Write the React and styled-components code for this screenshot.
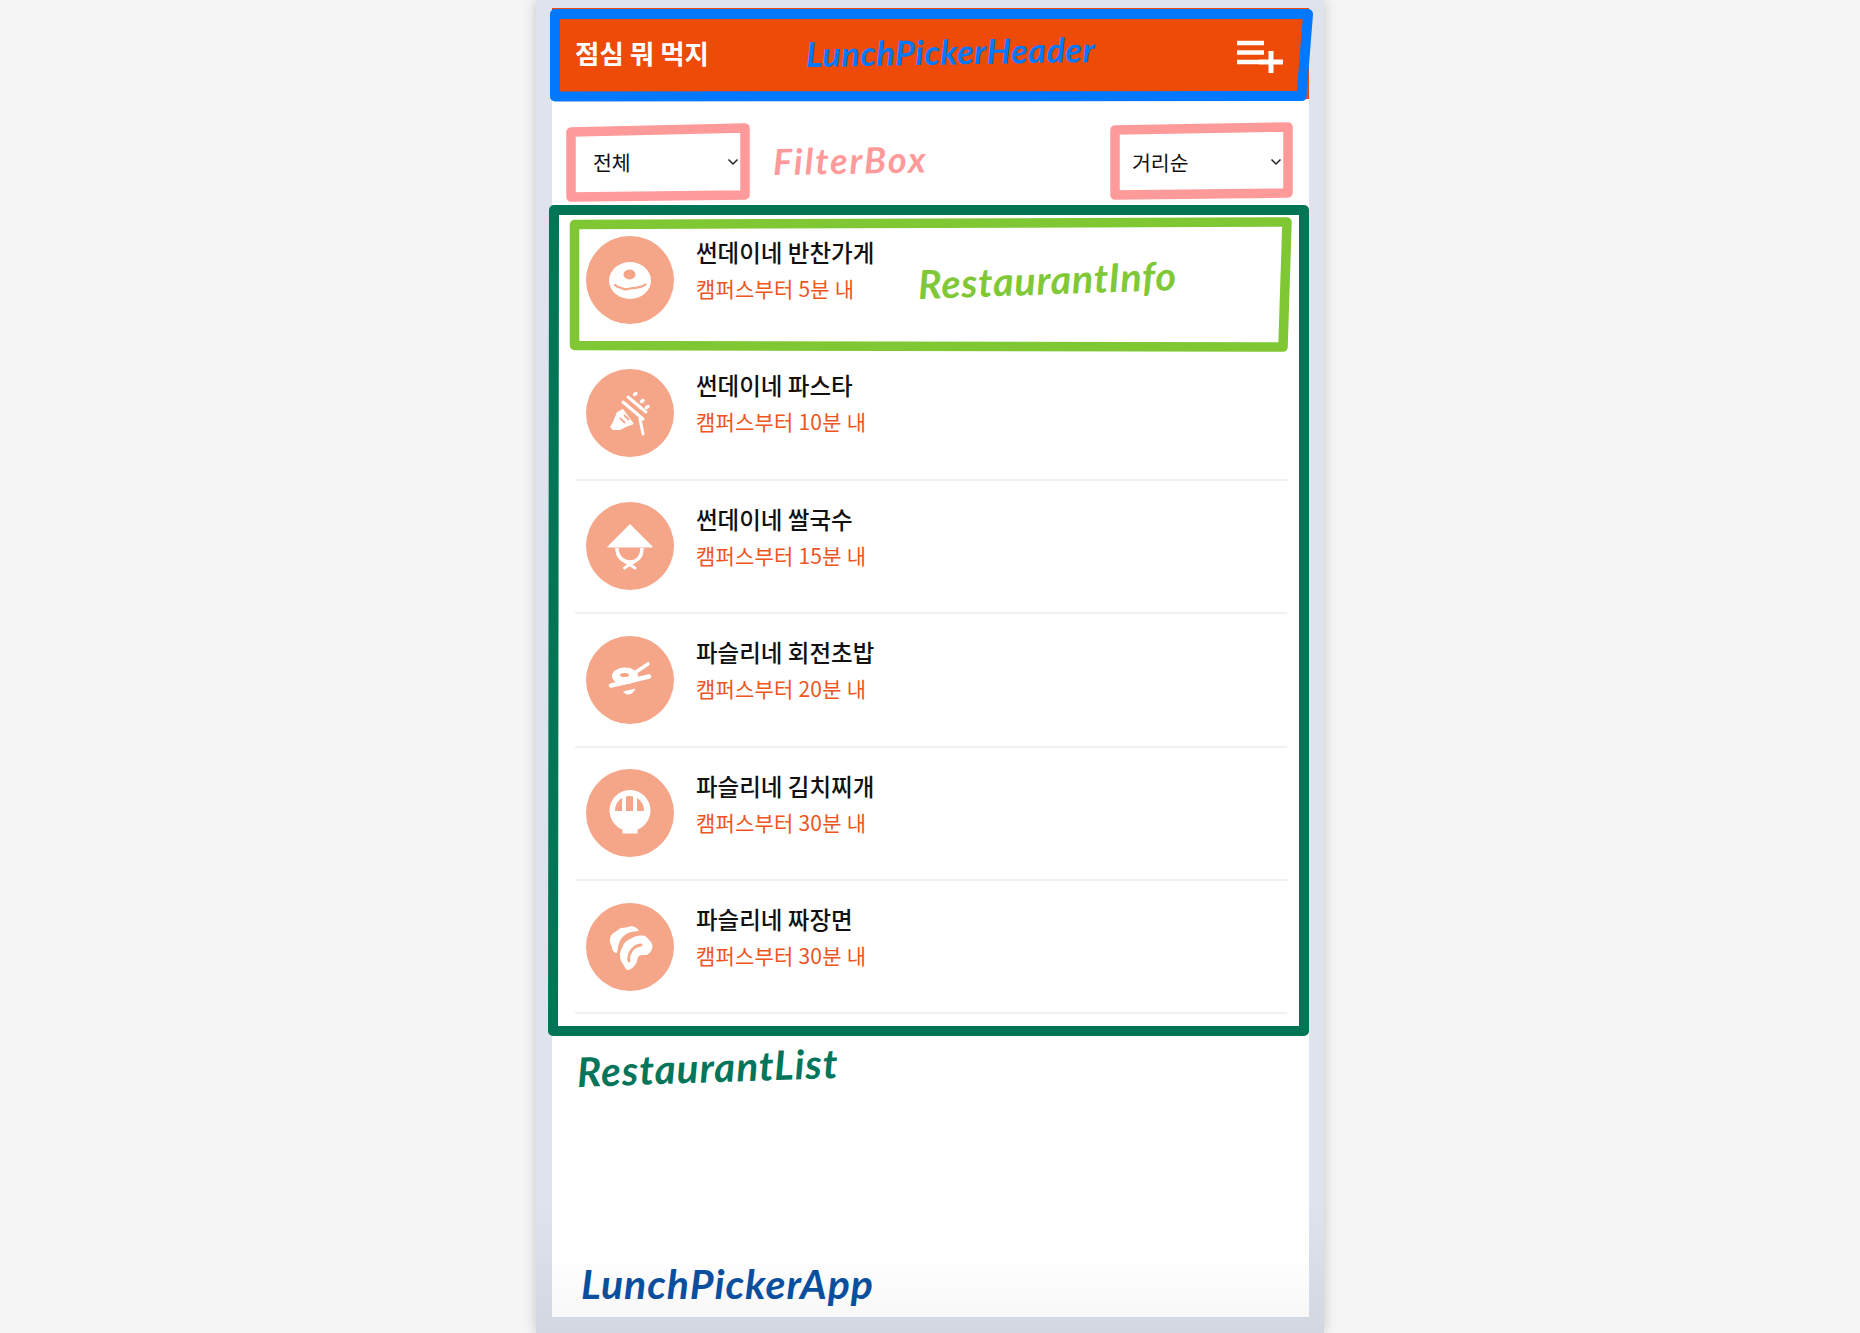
import React from "react";
import styled, { createGlobalStyle } from "styled-components";

const KR = `"Noto Sans CJK KR", "Noto Sans", sans-serif`;

const Global = createGlobalStyle`
  html, body { margin: 0; padding: 0; background: #f5f5f5; }
  #root { min-height: 1333px; }
  * { box-sizing: border-box; }
`;

const Page = styled.div`
  position: relative;
  height: 1333px;
  display: flex;
  justify-content: center;
  overflow: hidden;
  font-family: ${KR};
`;

const Phone = styled.div`
  width: 788px;
  height: 1333px;
  padding: 8px 15px 16px 16px;
  background: linear-gradient(#dfe3ee 0, #dfe3ee 90%, #d3d7e2 100%);
  box-shadow: 0 0 12px rgba(0, 0, 0, 0.2);
`;

const Screen = styled.main`
  height: 100%;
  background: linear-gradient(#fff 0, #fff 95%, #f8f8f9 100%);
  display: flex;
  flex-direction: column;
`;

const Header = styled.header`
  height: 91px;
  flex: none;
  background: #ee4a08;
  display: flex;
  align-items: center;
  justify-content: space-between;
  padding: 0 26px 0 23px;
`;

const Title = styled.h1`
  margin: 0 0 2px;
  color: #fff;
  font-size: 26.5px;
  line-height: 36px;
  font-weight: 700;
`;

const AddButton = styled.button`
  border: 0;
  padding: 0;
  background: none;
  display: flex;
  margin-top: 5px;
`;

const FilterBox = styled.div`
  height: 105px;
  flex: none;
  display: flex;
  align-items: center;
  justify-content: space-between;
  padding: 20px 26px 0 24px;
`;

const Select = styled.select`
  width: 164px;
  height: 56px;
  padding: 0 0 0 ${(p) => p.$inset}px;
  border: 0;
  border-radius: 8px;
  appearance: none;
  background: #fff url("data:image/svg+xml,%3Csvg xmlns='http://www.w3.org/2000/svg' width='12' height='8' viewBox='0 0 12 8'%3E%3Cpath d='M1.500 1.500L6 6l4.500-4.500' fill='none' stroke='%23222' stroke-width='1.500'/%3E%3C/svg%3E") no-repeat right 1px center;
  color: #111;
  font-family: ${KR};
  font-size: 20.5px;
`;

const List = styled.ul`
  list-style: none;
  margin: 10px 0 0;
  padding: 0 22px 0 23px;
`;

const Row = styled.li`
  height: 133.4px;
  padding-left: 11px;
  display: flex;
  align-items: center;
  gap: 22px;
  border-bottom: 2px solid #f0f0f0;
`;

const Badge = styled.div`
  width: 88px;
  height: 88px;
  flex: none;
  border-radius: 50%;
  background: #f5a588;
`;

const Info = styled.div`
  align-self: flex-start;
  padding-top: 22px;
`;

const Name = styled.h2`
  margin: 0;
  color: #111;
  font-size: 23.5px;
  line-height: 32px;
  font-weight: 500;
`;

const Distance = styled.p`
  margin: 4px 0 0;
  color: #ee5520;
  font-size: 21px;
  line-height: 32px;
  font-weight: 400;
  letter-spacing: 0.2px;
`;

const Marks = styled.svg`
  position: absolute;
  left: 0;
  top: 0;
  pointer-events: none;
`;

const Note = styled.span`
  position: absolute;
  left: ${(p) => p.$x}px;
  top: ${(p) => p.$y}px;
  color: ${(p) => p.$color};
  font-family: Lato, "Open Sans", sans-serif;
  font-style: italic;
  font-weight: 700;
  font-size: ${(p) => p.$size}px;
  line-height: 1;
  white-space: nowrap;
  letter-spacing: ${(p) => p.$track || 0}px;
  transform: rotate(${(p) => p.$tilt || 0}deg);
  transform-origin: left center;
`;

const W = "#fff";
const O = "#f5a588";

const Svg = ({ children }) => (
  <svg width="88" height="88" viewBox="0 0 88 88" style={{ display: "block" }}>
    {children}
  </svg>
);

const Donut = () => (
  <Svg>
    <ellipse cx="44" cy="44.500" rx="21" ry="18.500" fill={W} />
    <ellipse cx="43.500" cy="38.500" rx="6" ry="5" fill={O} />
    <path d="M29 49c3 3 5 2 7.500 3.500s5 1 7.500 0 5 0 7.500-1 5.500-.5 8-3" fill="none" stroke={O} strokeWidth="2.200" strokeLinecap="round" />
  </Svg>
);

const Pasta = () => (
  <Svg>
    <path d="M24 58l3-5 4-10 6-3 11 15-6 2-8 4-7 0z" fill={W} />
    <path d="M34 49l5 5M38 46l5 5" fill="none" stroke={O} strokeWidth="1.800" />
    <path d="M37 33l20 17M42 28l18 15M54 50l3 15" fill="none" stroke={W} strokeWidth="3" strokeLinecap="round" />
    <path d="M48.500 25.500l1.500-1M55.500 32.500l1.500-1M60.500 38.500l1.500-1" fill="none" stroke={W} strokeWidth="3.400" strokeLinecap="round" />
  </Svg>
);

const Hat = () => (
  <Svg>
    <path d="M44 22L66.500 44.500Q67 45.500 66 45.500H22q-1 0-.500-1z" fill={W} />
    <path d="M31 46c0 9 6 14 13 14s12-5 12-14" fill="none" stroke={W} strokeWidth="3.600" />
    <path d="M38.500 66l10-6.500M49 66l-10-6.500" fill="none" stroke={W} strokeWidth="3" strokeLinecap="round" />
  </Svg>
);

const Sushi = () => (
  <Svg>
    <ellipse cx="39" cy="40" rx="13" ry="8.500" fill={W} />
    <ellipse cx="38.500" cy="39" rx="4.500" ry="2" fill={O} />
    <path d="M47 38l15-10" stroke={W} strokeWidth="3.600" strokeLinecap="round" />
    <path d="M25 49.500l38-9" stroke={W} strokeWidth="4.600" strokeLinecap="round" />
    <path d="M37 55.500L49.500 52.500Q47 58.500 42 58.500Q39 58.500 37 55.500z" fill={W} />
  </Svg>
);

const Bowl = () => (
  <Svg>
    <circle cx="44" cy="41.500" r="20.500" fill={W} />
    <rect x="36.500" y="56" width="15" height="8.500" fill={W} />
    <path d="M29 42h7V29q-7 4-7 13zM40 42h7V27.500q-3.500-.8-7 0zM51 42h7q0-9-7-13z" fill={O} />
  </Svg>
);

const Dumpling = () => (
  <Svg>
    <path d="M25 33c1-3 5-4 8-7 3-2 6-1 9-2 4-2 9 0 11 4-4 0-8 1-11 2-4 2-7 5-8 8-2 4-2 8-3 12-3 0-5-3-5-6-2-3-3-8-1-11z" fill={W} />
    <path d="M37 43c1-4 5-6 9-8 3-2 8-3 13-2 3 2 4 4 6 6 2 3 2 6 0 9-1 2-3 4-6 4-3 0-5 0-7 2-1 3-1 6-3 8-2 3-5 5-8 5-2-2-3-4-4-6-2-2-3-5-3-9 0-3 1-6 3-9z" fill={W} />
    <path d="M55 42c-5 0-11 5-12 11-.5 2-.5 3 0 5" fill="none" stroke={O} strokeWidth="2.800" strokeLinecap="round" />
  </Svg>
);

const restaurants = [
  { name: "썬데이네 반찬가게", time: "캠퍼스부터 5분 내", Icon: Donut },
  { name: "썬데이네 파스타", time: "캠퍼스부터 10분 내", Icon: Pasta },
  { name: "썬데이네 쌀국수", time: "캠퍼스부터 15분 내", Icon: Hat },
  { name: "파슬리네 회전초밥", time: "캠퍼스부터 20분 내", Icon: Sushi },
  { name: "파슬리네 김치찌개", time: "캠퍼스부터 30분 내", Icon: Bowl },
  { name: "파슬리네 짜장면", time: "캠퍼스부터 30분 내", Icon: Dumpling },
];

export default function App() {
  return (
    <Page>
      <Global />
      <Phone>
        <Screen>
          <Header>
            <Title>점심 뭐 먹지</Title>
            <AddButton aria-label="추가">
              <svg width="48" height="36" viewBox="0 0 48 36">
                <path d="M2 5h27M2 14.500h27M2 24h22" stroke="#fff" strokeWidth="4.500" />
                <path d="M36 13v22M24 24h24" stroke="#fff" strokeWidth="5" />
              </svg>
            </AddButton>
          </Header>
          <FilterBox>
            <Select defaultValue="전체" $inset={17}>
              <option>전체</option>
            </Select>
            <Select defaultValue="거리순" $inset={13}>
              <option>거리순</option>
            </Select>
          </FilterBox>
          <List>
            {restaurants.map(({ name, time, Icon }) => (
              <Row key={name}>
                <Badge>
                  <Icon />
                </Badge>
                <Info>
                  <Name>{name}</Name>
                  <Distance>{time}</Distance>
                </Info>
              </Row>
            ))}
          </List>
        </Screen>
      </Phone>

      <Marks width="1860" height="1333" viewBox="0 0 1860 1333" fill="none" strokeLinejoin="round">
        <path d="M555 14L1308 14L1301.500 96L555 96.500Z" stroke="#0078ff" strokeWidth="10" />
        <path d="M571 132L745 128L745 195L571 197Z" stroke="#ff9a9a" strokeWidth="9.500" />
        <path d="M1115 130L1288 127L1288 193L1115 195Z" stroke="#ff9a9a" strokeWidth="9.500" />
        <path d="M554 210L1304 210L1304 1031L553 1031Z" stroke="#027557" strokeWidth="10" />
        <path d="M574.500 224.500L1287 222L1283 347L574.500 345.500Z" stroke="#7fc733" strokeWidth="9.500" />
      </Marks>
      <Note $x={806} $y={37} $size={34} $color="#0078ff" $track={0.6} $tilt={-1}>LunchPickerHeader</Note>
      <Note $x={773} $y={143} $size={36} $color="#ff9a9a" $track={2} $tilt={-1}>FilterBox</Note>
      <Note $x={918} $y={264} $size={39.500} $color="#80c836" $track={0.8} $tilt={-2}>RestaurantInfo</Note>
      <Note $x={577} $y={1052} $size={40.500} $color="#03755a" $track={1} $tilt={-2}>RestaurantList</Note>
      <Note $x={581} $y={1263} $size={41} $color="#0a4f9e" $track={1} $tilt={0}>LunchPickerApp</Note>
    </Page>
  );
}
